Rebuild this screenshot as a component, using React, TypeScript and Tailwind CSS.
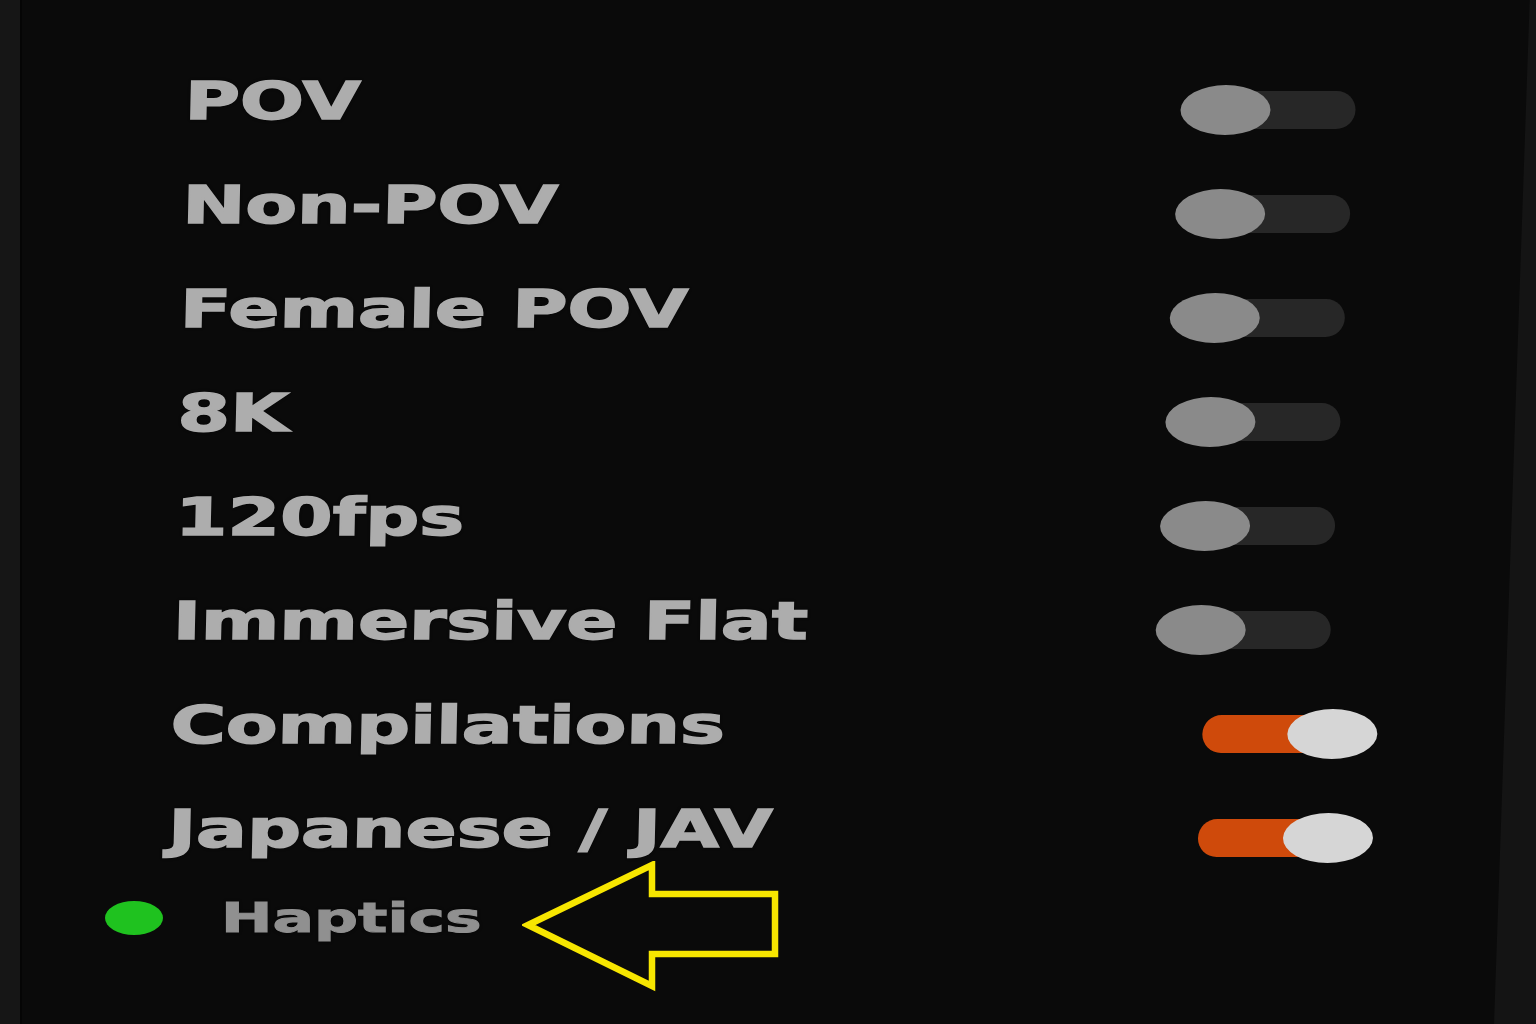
import React from 'react'

type Row = { label: string; on: boolean; nudge: string }

const rows: Row[] = [
  { label: 'POV', on: false, nudge: 'mr-0' },
  { label: 'Non-POV', on: false, nudge: 'mr-[3px]' },
  { label: 'Female POV', on: false, nudge: 'mr-[6px]' },
  { label: '8K', on: false, nudge: 'mr-[8px]' },
  { label: '120fps', on: false, nudge: 'mr-[11px]' },
  { label: 'Immersive Flat', on: false, nudge: 'mr-[13px]' },
  { label: 'Compilations', on: true, nudge: 'mr-[9px]' },
  { label: 'Japanese / JAV', on: true, nudge: 'mr-[11px]' },
]

const Switch = ({ on }: { on: boolean }) => (
  <div
    className={`relative h-[38px] w-[130px] rounded-full ${on ? 'bg-[#cf4a0b]' : 'bg-[#272727]'}`}
  >
    <div
      className={`absolute top-[-6px] h-[50px] w-[90px] rounded-[50%] ${
        on ? 'right-[-45px] bg-[#d6d6d6]' : 'left-[-45px] bg-[#8a8a8a]'
      }`}
    />
  </div>
)

const App = () => {
  return (
    <div className="flex h-screen w-full overflow-hidden bg-[#0a0a0a] font-['DejaVu_Sans',sans-serif]">
      <div className="w-[22px] shrink-0 border-r-2 border-[#050505] bg-[#161616]" />
      <div className="relative flex-1">
        <div className="absolute inset-y-0 right-0 w-[42px] bg-[#141414] [clip-path:polygon(85%_0,100%_0,100%_100%,0_100%)]" />

        <div className="origin-top skew-x-[-1.3deg] pl-[165px] pr-[178px] pt-[49px]">
          {rows.map((r) => (
            <div key={r.label} className="flex h-[104px] items-center justify-between">
              <span className="inline-block origin-left scale-x-[1.45] whitespace-nowrap text-[52px] font-bold leading-none text-[#adadad] [-webkit-text-stroke:1.5px_#adadad] [text-shadow:0_0_3px_#000]">
                {r.label}
              </span>
              <div className={`mt-[18px] ${r.nudge}`}>
                <Switch on={r.on} />
              </div>
            </div>
          ))}
        </div>

        <div className="flex h-[74px] items-center pl-[83px]">
          <div className="h-[34px] w-[58px] rounded-[50%] bg-[#1fc21f]" />
          <div className="ml-[58px] w-[301px]">
            <span className="inline-block origin-left scale-x-[1.5] whitespace-nowrap text-[41px] font-bold leading-none text-[#909090] [-webkit-text-stroke:1px_#909090] [text-shadow:0_0_3px_#000]">
              Haptics
            </span>
          </div>
          <svg width="262" height="132" viewBox="0 0 262 132" className="mt-[18px]">
            <polygon
              points="6,64 130,4 130,33 253,33 253,93 130,93 130,125"
              fill="none"
              stroke="#f7e600"
              strokeWidth="6.5"
              strokeLinejoin="miter"
            />
          </svg>
        </div>
      </div>
    </div>
  )
}

export default App
